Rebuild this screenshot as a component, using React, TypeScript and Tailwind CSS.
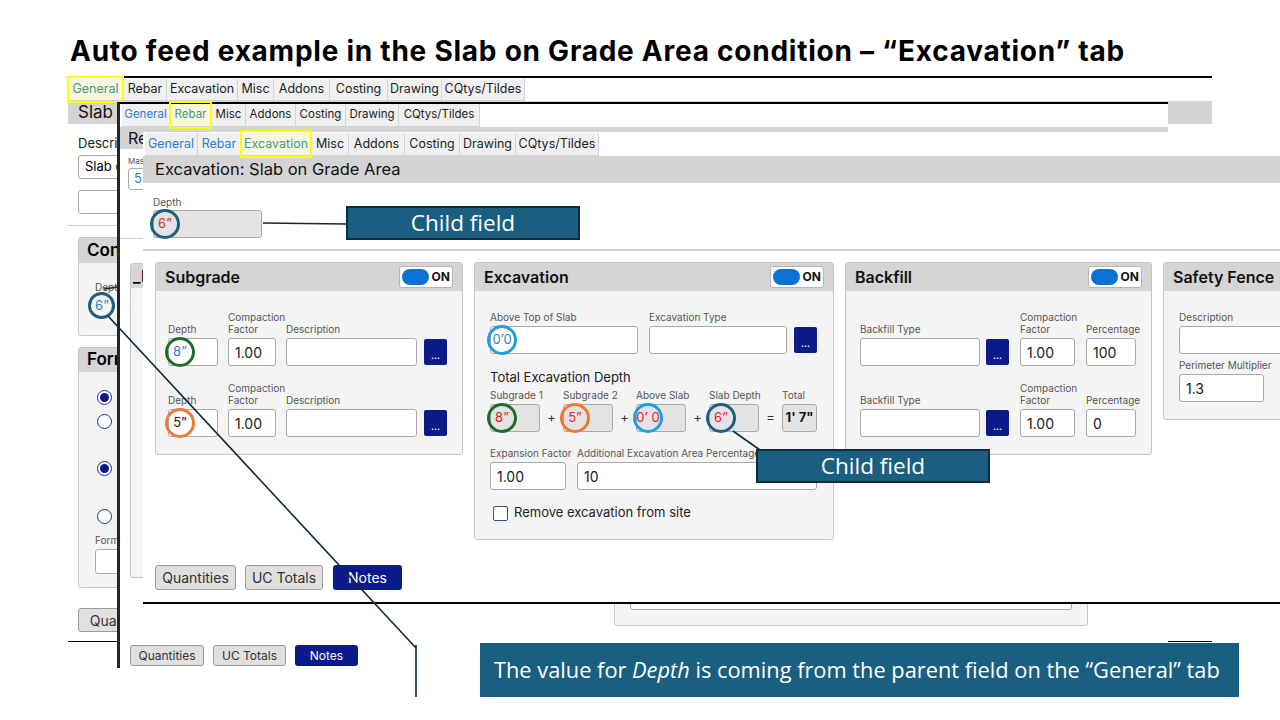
import React from 'react';

type TabDef = { label: string; w: string; kind?: 'blue' | 'hl' };

const tabs1: TabDef[] = [
  { label: 'General', w: 'w-[56px]', kind: 'hl' },
  { label: 'Rebar', w: 'w-[43px]' },
  { label: 'Excavation', w: 'w-[71px]' },
  { label: 'Misc', w: 'w-[36px]' },
  { label: 'Addons', w: 'w-[56px]' },
  { label: 'Costing', w: 'w-[58px]' },
  { label: 'Drawing', w: 'w-[54px]' },
  { label: 'CQtys/Tildes', w: 'w-[83px]' },
];
const tabs2: TabDef[] = [
  { label: 'General', w: 'w-[48px]', kind: 'blue' },
  { label: 'Rebar', w: 'w-[42px]', kind: 'hl' },
  { label: 'Misc', w: 'w-[34px]' },
  { label: 'Addons', w: 'w-[50px]' },
  { label: 'Costing', w: 'w-[50px]' },
  { label: 'Drawing', w: 'w-[53px]' },
  { label: 'CQtys/Tildes', w: 'w-[81px]' },
];
const tabs3: TabDef[] = [
  { label: 'General', w: 'w-[53px]', kind: 'blue' },
  { label: 'Rebar', w: 'w-[43px]', kind: 'blue' },
  { label: 'Excavation', w: 'w-[71px]', kind: 'hl' },
  { label: 'Misc', w: 'w-[37px]' },
  { label: 'Addons', w: 'w-[56px]' },
  { label: 'Costing', w: 'w-[55px]' },
  { label: 'Drawing', w: 'w-[56px]' },
  { label: 'CQtys/Tildes', w: 'w-[83px]' },
];

function Tabs({ tabs, size }: { tabs: TabDef[]; size: string }) {
  return (
    <div className={`flex h-full ${size}`}>
      {tabs.map((t) => (
        <div
          key={t.label}
          className={`relative ${t.w} h-full flex items-center justify-center border-r border-b border-[#d2d2d2] whitespace-nowrap ${
            t.kind === 'hl'
              ? 'bg-[#f8f7de] text-[#3f9b84]'
              : t.kind === 'blue'
              ? 'bg-[#f0f0f0] text-[#2b7fd0]'
              : 'bg-[#f0f0f0] text-[#1c1c1c]'
          }`}
        >
          {t.label}
          {t.kind === 'hl' && (
            <div className="absolute -left-[1px] -right-[1px] -top-[3px] -bottom-[3px] border-2 border-[#ffff00]" />
          )}
        </div>
      ))}
    </div>
  );
}

function Field({
  label,
  children,
  w,
  className = '',
}: {
  label: string;
  children: React.ReactNode;
  w: string;
  className?: string;
}) {
  return (
    <div className={`flex flex-col shrink-0 ${w} ${className}`}>
      <div className="text-[10px] leading-[12px] text-[#555] mb-[3px] whitespace-pre">{label}</div>
      {children}
    </div>
  );
}

function Input({
  w,
  disabled,
  children,
  className = '',
}: {
  w: string;
  disabled?: boolean;
  children?: React.ReactNode;
  className?: string;
}) {
  return (
    <div
      className={`${w} h-[28px] shrink-0 flex items-center border border-[#a9a9a9] rounded-[3px] ${
        disabled ? 'bg-[#e3e3e3]' : 'bg-white'
      } text-[14px] text-[#1a1a1a] px-[6px] ${className}`}
    >
      {children}
    </div>
  );
}

function Ring({ color, text, children }: { color: string; text: string; children: React.ReactNode }) {
  return (
    <span
      className={`inline-flex items-center justify-center w-[30px] h-[30px] shrink-0 rounded-full border-[3px] ${color} ${text} -ml-[10px] text-[13px] whitespace-nowrap`}
    >
      {children}
    </span>
  );
}

function Dots() {
  return (
    <div className="w-[23px] h-[26px] mb-[1px] bg-[#0b1a86] rounded-[2px] text-white text-[9px] font-bold flex items-end justify-center pb-[5px] leading-none">
      ...
    </div>
  );
}

function Toggle() {
  return (
    <div className="w-[54px] h-[22px] bg-white border border-[#b5b5b5] rounded-[3px] flex items-center px-[2px] gap-[3px]">
      <div className="w-[27px] h-[16px] rounded-full bg-[#0b72d4]" />
      <span className="text-[12px] font-bold text-[#111]">ON</span>
    </div>
  );
}

function Card({
  title,
  toggle,
  w,
  children,
}: {
  title: string;
  toggle?: boolean;
  w: string;
  children: React.ReactNode;
}) {
  return (
    <div className={`${w} shrink-0 border border-[#c6c6c6] rounded-[3px] bg-[#f4f4f4] overflow-hidden`}>
      <div className="h-[28px] bg-[#d5d5d5] flex items-center justify-between px-[9px]">
        <span className="text-[16px] font-semibold text-[#111] whitespace-nowrap">{title}</span>
        {toggle && <Toggle />}
      </div>
      {children}
    </div>
  );
}

function Sign({ s }: { s: string }) {
  return <div className="w-[23px] shrink-0 h-[28px] flex items-center justify-center text-[13px] text-[#333]">{s}</div>;
}

const RED = 'text-[#e3222b]';
const BLUE = 'text-[#2b7fd0]';

function Layer1() {
  return (
    <div className="absolute left-[68px] top-[76px] w-[1144px] h-[566px] bg-white border-t-2 border-t-black border-b border-b-black flex flex-col">
      <div className="h-[23px] pt-[1px]">
        <Tabs tabs={tabs1} size="text-[12.5px]" />
      </div>
      <div className="h-[23px] bg-[#d4d4d4] flex items-center px-[10px] text-[17px] text-[#111]">Slab on Grade Area</div>
      <div className="flex flex-col px-[10px]">
        <div className="mt-[11px] text-[13px] leading-[16px] text-[#222]">Description</div>
        <div className="mt-[4px] w-[220px] h-[24px] border border-[#a9a9a9] rounded-[3px] flex items-center px-[6px] text-[13px]">
          Slab on Grade Area
        </div>
        <div className="mt-[11px] w-[220px] h-[24px] border border-[#a9a9a9] rounded-[3px]" />
        <div className="mt-[11px] -mx-[10px] border-t border-[#cfcfcf]" />
        <div className="mt-[11px] w-[300px] h-[99px] border border-[#c6c6c6] rounded-[3px] bg-[#f4f4f4] overflow-hidden">
          <div className="h-[25px] bg-[#d5d5d5] flex items-center px-[8px] text-[17px] font-semibold">Concrete</div>
          <div className="pl-[10px] pt-[18px] flex flex-col">
            <div className="ml-[6px] text-[10px] leading-[12px] text-[#555]">Depth</div>
            <div className="w-[26px] h-[26px] flex items-center justify-center text-[13px] text-[#2b7fd0]">6”</div>
          </div>
        </div>
        <div className="mt-[11px] w-[300px] h-[241px] border border-[#c6c6c6] rounded-[3px] bg-[#f4f4f4] overflow-hidden flex flex-col">
          <div className="h-[24px] bg-[#d5d5d5] flex items-center px-[8px] text-[17px] font-semibold">Formwork</div>
          <div className="pl-[18px] flex flex-col">
            <div className="mt-[18px] w-[15px] h-[15px] rounded-full border-[1.5px] border-[#1a2a9a] bg-white flex items-center justify-center">
              <div className="w-[9px] h-[9px] rounded-full bg-[#0b1a8a]" />
            </div>
            <div className="mt-[9px] w-[15px] h-[15px] rounded-full border-[1.5px] border-[#1a2a9a] bg-white" />
            <div className="mt-[32px] w-[15px] h-[15px] rounded-full border-[1.5px] border-[#1a2a9a] bg-white flex items-center justify-center">
              <div className="w-[9px] h-[9px] rounded-full bg-[#0b1a8a]" />
            </div>
            <div className="mt-[33px] w-[15px] h-[15px] rounded-full border-[1.5px] border-[#1a2a9a] bg-white" />
          </div>
          <div className="pl-[16px] mt-[10px] text-[10px] leading-[12px] text-[#555]">Formwork Type</div>
          <div className="ml-[16px] mt-[3px] w-[200px] h-[25px] border border-[#a9a9a9] rounded-[3px] bg-white" />
        </div>
        <div className="mt-[20px] w-[90px] h-[24px] bg-[#e0e0e0] border border-[#9a9a9a] rounded-[3px] flex items-center justify-center text-[14px] text-[#333]">
          Quantities
        </div>
      </div>
    </div>
  );
}

function Layer2() {
  return (
    <div className="absolute left-[117px] top-[102px] w-[1051px] h-[566px] bg-white border-l-[3px] border-l-[#262626] border-t-2 border-t-black flex flex-col">
      <div className="h-[23px] pl-[2px]">
        <Tabs tabs={tabs2} size="text-[11.5px]" />
      </div>
      <div className="h-[22px] bg-[#d4d4d4] flex items-center px-[8px] text-[16px] text-[#111]">Rebar: Slab on Grade Area</div>
      <div className="flex flex-col pl-[8px]">
        <div className="mt-[7px] text-[8px] leading-[10px] text-[#555]">Mass</div>
        <div className="mt-[2px] w-[60px] h-[22px] border border-[#a9a9a9] rounded-[3px] flex items-center px-[5px] text-[13px] text-[#2b7fd0]">
          5
        </div>
        <div className="mt-[48px] -ml-[8px] border-t border-[#cfcfcf]" />
        <div className="mt-[24px] flex items-start gap-[14px] pl-[2px]">
          <div className="w-[470px] h-[315px] border border-[#c6c6c6] rounded-[3px] bg-[#f4f4f4] overflow-hidden">
            <div className="h-[24px] bg-[#d5d5d5] flex items-center px-[2px] text-[16px] font-semibold">_Rebar</div>
          </div>
          <div className="w-[474px] h-[363px] border border-[#c6c6c6] rounded-[3px] bg-[#f4f4f4] flex flex-col justify-end px-[15px] pb-[15px]">
            <div className="h-[28px] border border-[#a9a9a9] rounded-[3px] bg-white" />
          </div>
        </div>
        <div className="mt-[19px] pl-[2px] flex gap-[9px]">
          <div className="w-[74px] h-[21px] bg-[#e0e0e0] border border-[#9a9a9a] rounded-[3px] flex items-center justify-center text-[12px] text-[#333]">
            Quantities
          </div>
          <div className="w-[73px] h-[21px] bg-[#e0e0e0] border border-[#9a9a9a] rounded-[3px] flex items-center justify-center text-[12px] text-[#333]">
            UC Totals
          </div>
          <div className="w-[63px] h-[21px] bg-[#0b1a8a] rounded-[3px] flex items-center justify-center text-[12px] text-white">
            Notes
          </div>
        </div>
      </div>
    </div>
  );
}

function Layer3() {
  return (
    <div className="absolute left-[143px] top-[132px] w-[1180px] h-[472px] bg-white border-b-2 border-b-black flex flex-col">
      <div className="mt-[1px] h-[23px] pl-[2px]">
        <Tabs tabs={tabs3} size="text-[12.5px]" />
      </div>
      <div className="h-[27px] bg-[#d4d4d4] flex items-center pl-[12px] text-[16.5px] text-[#111]">Excavation: Slab on Grade Area</div>
      <div className="pl-[10px] flex flex-col">
        <div className="mt-[13px] text-[10px] leading-[12px] text-[#555]">Depth</div>
        <Input w="w-[109px]" disabled className="mt-[2px]">
          <Ring color="border-[#1c5f7e]" text={RED}>6”</Ring>
        </Input>
      </div>
      <div className="mt-[11px] h-[2px] bg-[#d4d4d4]" />
      <div className="mt-[11px] pl-[12px] flex items-start gap-[11px]">
        <Card title="Subgrade" toggle w="w-[308px]">
          <div className="pt-[20px] pl-[12px] pb-[17px] flex flex-col gap-[16px]">
            {[
              { ring: 'border-[#1e6b2c]', txt: BLUE, v: '8”' },
              { ring: 'border-[#ec7a35]', txt: 'text-[#1a1a1a]', v: '5”' },
            ].map((r, i) => (
              <div key={i} className="flex items-end">
                <Field label="Depth" w="w-[50px]">
                  <Input w="w-[50px]">
                    <Ring color={r.ring} text={r.txt}>{r.v}</Ring>
                  </Input>
                </Field>
                <Field label={'Compaction\nFactor'} w="w-[48px]" className="ml-[10px]">
                  <Input w="w-[48px]">1.00</Input>
                </Field>
                <Field label="Description" w="w-[131px]" className="ml-[10px]">
                  <Input w="w-[131px]" />
                </Field>
                <div className="ml-[7px]">
                  <Dots />
                </div>
              </div>
            ))}
          </div>
        </Card>
        <Card title="Excavation" toggle w="w-[360px]">
          <div className="pt-[20px] pl-[15px] pb-[18px] flex flex-col">
            <div className="flex items-end">
              <Field label="Above Top of Slab" w="w-[148px]">
                <Input w="w-[148px]">
                  <Ring color="border-[#1ea0dc]" text={BLUE}>0’0</Ring>
                </Input>
              </Field>
              <Field label="Excavation Type" w="w-[138px]" className="ml-[11px]">
                <Input w="w-[138px]" />
              </Field>
              <div className="ml-[7px]">
                <Dots />
              </div>
            </div>
            <div className="mt-[15px] text-[13px] leading-[16px] text-[#222]">Total Excavation Depth</div>
            <div className="mt-[4px] flex items-end">
              <Field label="Subgrade 1" w="w-[50px]">
                <Input w="w-[50px]" disabled>
                  <Ring color="border-[#1e6b2c]" text={RED}>8”</Ring>
                </Input>
              </Field>
              <Sign s="+" />
              <Field label="Subgrade 2" w="w-[50px]">
                <Input w="w-[50px]" disabled>
                  <Ring color="border-[#ec7a35]" text={RED}>5”</Ring>
                </Input>
              </Field>
              <Sign s="+" />
              <Field label="Above Slab" w="w-[50px]">
                <Input w="w-[50px]" disabled>
                  <Ring color="border-[#1ea0dc]" text={RED}>0’ 0</Ring>
                </Input>
              </Field>
              <Sign s="+" />
              <Field label="Slab Depth" w="w-[50px]">
                <Input w="w-[50px]" disabled>
                  <Ring color="border-[#1c5f7e]" text={RED}>6”</Ring>
                </Input>
              </Field>
              <Sign s="=" />
              <Field label="Total" w="w-[35px]">
                <div className="w-[35px] h-[28px] bg-[#e3e3e3] border border-[#a9a9a9] rounded-[3px] flex items-center justify-center text-[13px] font-bold text-[#111] whitespace-nowrap">
                  1' 7"
                </div>
              </Field>
            </div>
            <div className="mt-[15px] flex items-end">
              <Field label="Expansion Factor" w="w-[76px]">
                <Input w="w-[76px]">1.00</Input>
              </Field>
              <Field label="Additional Excavation Area Percentage" w="w-[240px]" className="ml-[11px]">
                <Input w="w-[240px]">10</Input>
              </Field>
            </div>
            <div className="mt-[15px] h-[16px] flex items-center gap-[6px] pl-[3px]">
              <div className="w-[15px] h-[15px] border-[1.5px] border-[#3a4aa0] rounded-[2px] bg-white" />
              <span className="text-[13px] text-[#222]">Remove excavation from site</span>
            </div>
          </div>
        </Card>
        <Card title="Backfill" toggle w="w-[307px]">
          <div className="pt-[20px] pl-[14px] pb-[17px] flex flex-col gap-[16px]">
            {['100', '0'].map((p) => (
              <div key={p} className="flex items-end">
                <Field label="Backfill Type" w="w-[120px]">
                  <Input w="w-[120px]" />
                </Field>
                <div className="ml-[6px]">
                  <Dots />
                </div>
                <Field label={'Compaction\nFactor'} w="w-[55px]" className="ml-[11px]">
                  <Input w="w-[55px]">1.00</Input>
                </Field>
                <Field label="Percentage" w="w-[50px]" className="ml-[11px]">
                  <Input w="w-[50px]">{p}</Input>
                </Field>
              </div>
            ))}
          </div>
        </Card>
        <Card title="Safety Fence" w="w-[180px]">
          <div className="pt-[20px] pl-[15px] pb-[17px] flex flex-col">
            <Field label="Description" w="w-[160px]">
              <Input w="w-[160px]" />
            </Field>
            <Field label="Perimeter Multiplier" w="w-[85px]" className="mt-[5px]">
              <Input w="w-[85px]">1.3</Input>
            </Field>
          </div>
        </Card>
      </div>
      <div className="mt-auto mb-[12px] pl-[12px] flex gap-[9px]">
        <div className="w-[81px] h-[25px] bg-[#e0e0e0] border border-[#9a9a9a] rounded-[3px] flex items-center justify-center text-[14px] text-[#333]">
          Quantities
        </div>
        <div className="w-[78px] h-[25px] bg-[#e0e0e0] border border-[#9a9a9a] rounded-[3px] flex items-center justify-center text-[14px] text-[#333]">
          UC Totals
        </div>
        <div className="w-[69px] h-[25px] ml-[1px] bg-[#0b1a8a] rounded-[3px] flex items-center justify-center text-[14px] text-white">
          Notes
        </div>
      </div>
    </div>
  );
}

export default function App() {
  return (
    <div className="relative w-[1280px] h-[720px] bg-white overflow-hidden font-['Inter',sans-serif]">
      <h1 className="pt-[33px] pl-[70px] text-[28px] leading-[36px] font-bold text-black font-['Inter',sans-serif] tracking-[0.75px] whitespace-nowrap">
        Auto feed example in the Slab on Grade Area condition – “Excavation” tab
      </h1>
      <Layer1 />
      <Layer2 />
      <Layer3 />

      {/* Layer 1 parent value ring */}
      <div className="absolute left-[88px] top-[292px] w-[27px] h-[27px] rounded-full border-[3px] border-[#1c5f7e]" />

      <svg className="absolute inset-0 pointer-events-none" width="1280" height="720" viewBox="0 0 1280 720">
        <g stroke="#0f2a3a" strokeWidth="1.6" fill="none">
          <line x1="263" y1="223" x2="346" y2="224" />
          <line x1="108" y1="316" x2="416" y2="648" />
          <line x1="416" y1="645" x2="416" y2="697" />
          <line x1="733" y1="431" x2="760" y2="450" />
          <line x1="104" y1="289" x2="118" y2="287" />
        </g>
      </svg>

      <div className="absolute left-[346px] top-[206px] w-[234px] h-[34px] bg-[#1a5f80] border-2 border-[#0e2c3c] flex items-center justify-center text-white text-[22.5px] font-['Open_Sans',sans-serif]">
        Child field
      </div>
      <div className="absolute left-[756px] top-[449px] w-[234px] h-[34px] bg-[#1a5f80] border-2 border-[#0e2c3c] flex items-center justify-center text-white text-[22.5px] font-['Open_Sans',sans-serif]">
        Child field
      </div>
      <div className="absolute left-[480px] top-[643px] w-[759px] h-[54px] bg-[#1a5f80] flex items-center pl-[14px] text-white text-[21.8px] font-['Open_Sans',sans-serif] whitespace-nowrap overflow-hidden">
        The value for&nbsp;<span className="italic">Depth</span>&nbsp;is coming from the parent field on the “General” tab
      </div>
    </div>
  );
}
